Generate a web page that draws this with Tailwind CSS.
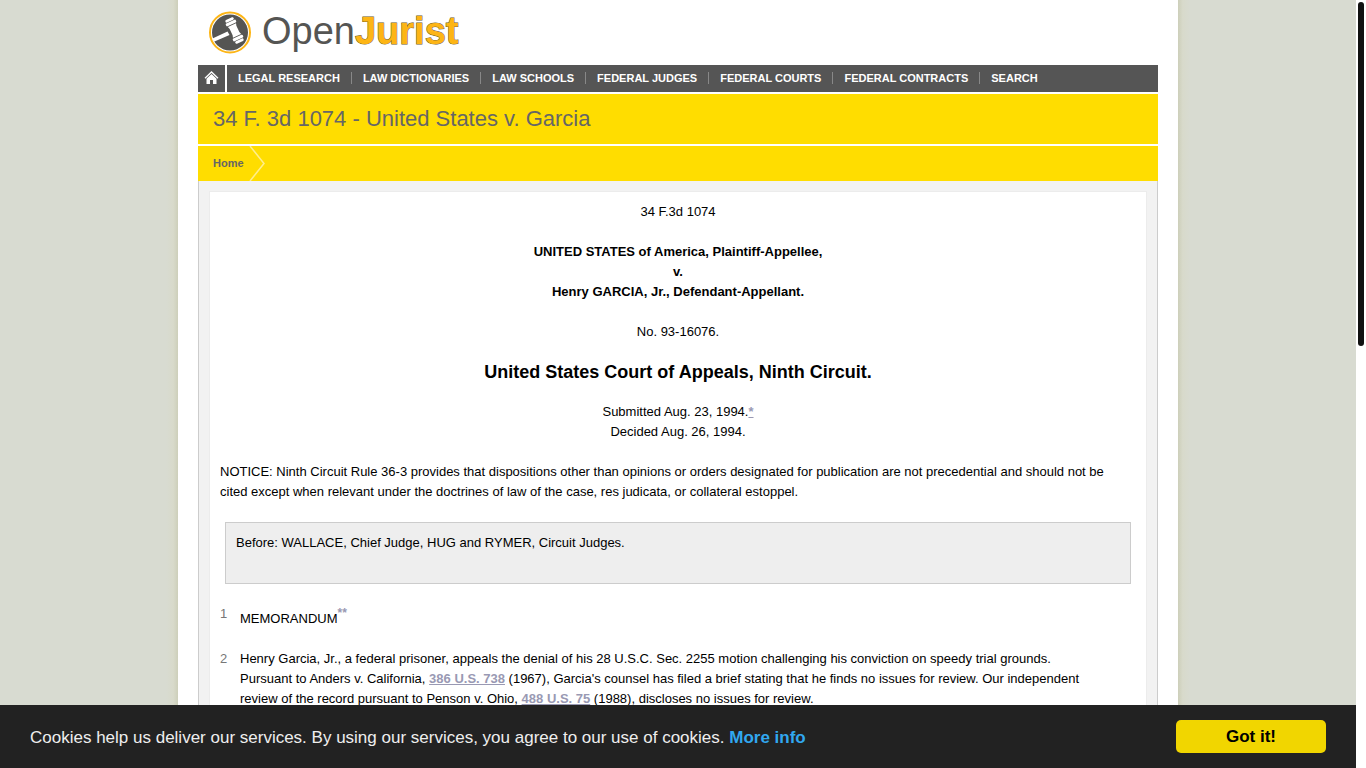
<!DOCTYPE html>
<html lang="en">
<head>
    <meta charset="UTF-8">
    <meta name="viewport" content="width=device-width, initial-scale=1.0">
    <title>34 F. 3d 1074 - United States v. Garcia | OpenJurist</title>
    <script src="https://cdn.jsdelivr.net/npm/@tailwindcss/browser@4"></script>
</head>
<body class="h-screen overflow-hidden flex bg-white text-black text-[13px] leading-5 font-['Liberation_Sans',Arial,sans-serif]">
    <div class="flex-1 min-w-0 flex flex-col">
        <div class="flex-1 min-h-0 overflow-hidden flex justify-center bg-[#d8dbd1]">
            <!-- Page edge shadow, left -->
            <div class="w-3 shrink-0 bg-linear-to-l from-[#cdcfba] from-0% via-[#d8dacb] via-40% to-[#d8dbd1]"></div>

            <div class="w-full max-w-[1000px] min-h-full bg-white px-5">
                <!-- Header -->
                <header class="h-[65px] px-[11px] pt-[11px]">
                    <a href="#" class="flex items-start gap-[10px]">
                        <svg class="size-[43px] shrink-0" viewBox="0 0 43 43" aria-hidden="true">
                            <circle cx="21" cy="21.500" r="20" fill="#fff" stroke="#fdb515" stroke-width="2"/>
                            <circle cx="21" cy="21.500" r="18" fill="#555553"/>
                            <g fill="#fff">
                                <path d="M3.500 27.500 L18.500 20.500 L20.500 24 L5.500 30.500 Q4 29.500 3.500 27.500Z"/>
                                <g transform="translate(25.500 19.500) rotate(-25)">
                                    <rect x="-4.500" y="-13" width="9" height="2.600" rx="1.200"/>
                                    <rect x="-5.500" y="-9.800" width="11" height="3" rx="1"/>
                                    <path d="M-4.500 -6h9l-.8 2.500v7l.8 2.500h-9l.8-2.500v-7z"/>
                                    <rect x="-5.500" y="6.800" width="11" height="3" rx="1"/>
                                    <rect x="-4.500" y="10.400" width="9" height="2.600" rx="1.200"/>
                                </g>
                            </g>
                        </svg>
                        <span class="text-[38px] leading-10 text-[#555553]">Open<b class="text-[#fdb515] [-webkit-text-stroke:1px_#6b5a2a] [paint-order:stroke]">Jurist</b></span>
                    </a>
                </header>

                <!-- Main menu -->
                <nav class="h-[27px] flex gap-[2px] text-[11px] font-bold text-white">
                    <a href="#" aria-label="Home" class="w-[27px] flex items-start justify-center pt-[6px] bg-[#555]">
                        <svg class="w-[15px] h-[13px]" viewBox="0 0 15 13" aria-hidden="true">
                            <path d="M1 7.300 L7.500 1 L14 7.300" fill="none" stroke="#fff" stroke-width="1.300"/>
                            <path d="M7.500 3 L12.500 7.800 V13 H9 V9 H6 V13 H2.500 V7.800Z" fill="#fff"/>
                        </svg>
                    </a>
                    <ul class="flex-1 flex items-start pt-[7px] bg-[#555] leading-3 whitespace-nowrap">
                        <li class="px-[11px] border-r border-[#888]"><a href="#">LEGAL RESEARCH</a></li>
                        <li class="px-[11px] border-r border-[#888]"><a href="#">LAW DICTIONARIES</a></li>
                        <li class="px-[11px] border-r border-[#888]"><a href="#">LAW SCHOOLS</a></li>
                        <li class="px-[11px] border-r border-[#888]"><a href="#">FEDERAL JUDGES</a></li>
                        <li class="px-[11px] border-r border-[#888]"><a href="#">FEDERAL COURTS</a></li>
                        <li class="px-[11px] border-r border-[#888]"><a href="#">FEDERAL CONTRACTS</a></li>
                        <li class="px-[11px]"><a href="#">SEARCH</a></li>
                    </ul>
                </nav>

                <h1 class="mt-[2px] h-[50px] px-[15px] bg-[#fd0] text-[22px] leading-[50px] text-[#666]">34 F. 3d 1074 - United States v. Garcia</h1>

                <!-- Breadcrumb -->
                <div class="mt-[2px] h-[35px] pl-[15px] flex items-center gap-[5px] bg-[#fd0] text-[11px] font-bold text-[#666]">
                    <a href="#" class="pb-[2px]">Home</a>
                    <svg class="w-4 h-[35px]" viewBox="0 0 16 35" aria-hidden="true">
                        <path d="M1 0 L15 17.500 L1 35" fill="none" stroke="#ffee8c" stroke-width="1.500"/>
                    </svg>
                </div>

                <!-- Opinion -->
                <main class="border-x border-[#ccc] bg-[#f2f2f2] p-[10px]">
                    <article class="border border-[#ececec] bg-white p-[10px] flex flex-col gap-5">
                        <p class="text-center">34 F.3d 1074</p>
                        <p class="text-center font-bold">UNITED STATES of America, Plaintiff-Appellee,<br>v.<br>Henry GARCIA, Jr., Defendant-Appellant.</p>
                        <p class="text-center">No. 93-16076.</p>
                        <h2 class="text-center text-[18px] leading-5 font-bold">United States Court of Appeals, Ninth Circuit.</h2>
                        <p class="text-center">Submitted Aug. 23, 1994.<a href="#" class="font-bold underline text-[#9999b3]">*</a><br>Decided Aug. 26, 1994.</p>
                        <p class="pr-5">NOTICE: Ninth Circuit Rule 36-3 provides that dispositions other than opinions or orders designated for publication are not precedential and should not be cited except when relevant under the doctrines of law of the case, res judicata, or collateral estoppel.</p>

                        <div class="mx-[5px] border border-[#ccc] bg-[#eee] px-[10px] pt-[10px] pb-[30px]">
                            <p>Before: WALLACE, Chief Judge, HUG and RYMER, Circuit Judges.</p>
                        </div>

                        <div class="flex">
                            <span class="w-5 shrink-0 text-[#777]">1</span>
                            <p class="pt-[5px] pr-10">MEMORANDUM<sup class="text-[12px]"><a href="#" class="font-bold text-[#9999b3]">**</a></sup></p>
                        </div>
                        <div class="flex">
                            <span class="w-5 shrink-0 text-[#777]">2</span>
                            <p class="pr-10">Henry Garcia, Jr., a federal prisoner, appeals the denial of his 28 U.S.C. Sec. 2255 motion challenging his conviction on speedy trial grounds. Pursuant to Anders v. California, <a href="#" class="font-bold underline text-[#9999b3]">386 U.S. 738</a> (1967), Garcia's counsel has filed a brief stating that he finds no issues for review. Our independent review of the record pursuant to Penson v. Ohio, <a href="#" class="font-bold underline text-[#9999b3]">488 U.S. 75</a> (1988), discloses no issues for review.</p>
                        </div>
                    </article>
                </main>
            </div>

            <!-- Page edge shadow, right -->
            <div class="w-3 shrink-0 bg-linear-to-r from-[#cdcfba] from-0% via-[#d8dacb] via-40% to-[#d8dbd1]"></div>
        </div>

        <!-- Cookie notice -->
        <div class="shrink-0 flex items-center justify-between px-[30px] py-[15px] bg-[#222] text-[17px] text-[#eee]">
            <p class="pt-[2px]">Cookies help us deliver our services. By using our services, you agree to our use of cookies. <a href="#" class="font-bold text-[#31a8f0]">More info</a></p>
            <button type="button" class="w-[150px] h-[33px] rounded-[5px] bg-[#f1d600] font-bold text-black">Got it!</button>
        </div>
    </div>

    <!-- Scroll track -->
    <div class="w-[10px] shrink-0 p-[2px] bg-white">
        <div class="h-[45%] rounded-full bg-[#111]"></div>
    </div>
</body>
</html>
